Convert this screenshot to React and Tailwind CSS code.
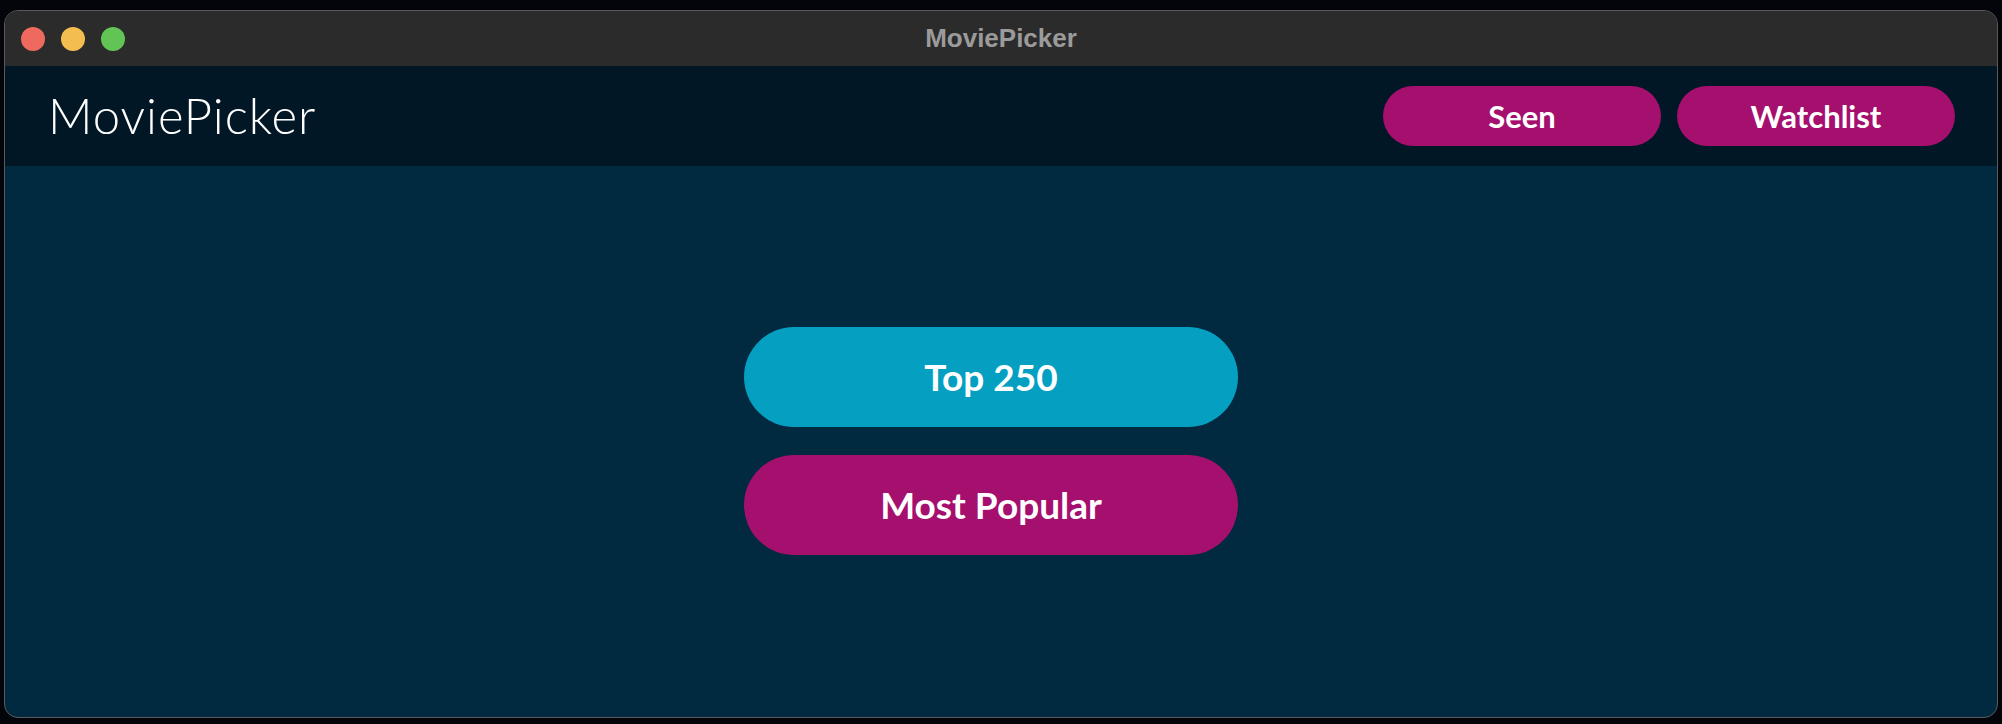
export default function App() {
  return (
    <div className="w-[2002px] h-[724px] bg-[#04050b] pt-[10px] pl-[4px] pr-[4px] pb-[6px] overflow-hidden">
      <div className="h-full flex flex-col rounded-[14px] overflow-hidden border border-[#5a5a5a] bg-[#012940]">
        {/* title bar */}
        <div className="relative h-[55px] shrink-0 bg-[#2b2b2b] flex items-center">
          <div className="flex items-center gap-[16px] pl-[16px]">
            <span className="w-[24px] h-[24px] rounded-full bg-[#ef6a5e]" />
            <span className="w-[24px] h-[24px] rounded-full bg-[#f4bd4f]" />
            <span className="w-[24px] h-[24px] rounded-full bg-[#61c454]" />
          </div>
          <div className="absolute inset-0 flex items-center justify-center pointer-events-none">
            <span className="text-[26px] font-bold text-[#9b9b9b] font-['Liberation_Sans',sans-serif]">MoviePicker</span>
          </div>
        </div>

        {/* header */}
        <div className="h-[100px] shrink-0 bg-[#011726] flex items-center justify-between pl-[43px] pr-[42px]">
          <span className="text-[49px] font-light text-white font-['Lato',sans-serif] tracking-[1px]">MoviePicker</span>
          <div className="flex items-center gap-[16px]">
            <button className="w-[278px] h-[60px] rounded-full bg-[#a50f6e] text-white text-[31px] font-bold font-['Lato',sans-serif]">Seen</button>
            <button className="w-[278px] h-[60px] rounded-full bg-[#a50f6e] text-white text-[31px] font-bold font-['Lato',sans-serif]">Watchlist</button>
          </div>
        </div>

        {/* content */}
        <div className="flex-1 flex flex-col items-center justify-center gap-[28px] pr-[20px] pb-[2px]">
          <button className="w-[494px] h-[100px] rounded-full bg-[#059fc2] text-white text-[37px] font-bold font-['Lato',sans-serif]">Top 250</button>
          <button className="w-[494px] h-[100px] rounded-full bg-[#a50f6e] text-white text-[37px] font-bold font-['Lato',sans-serif]">Most Popular</button>
        </div>
      </div>
    </div>
  )
}
